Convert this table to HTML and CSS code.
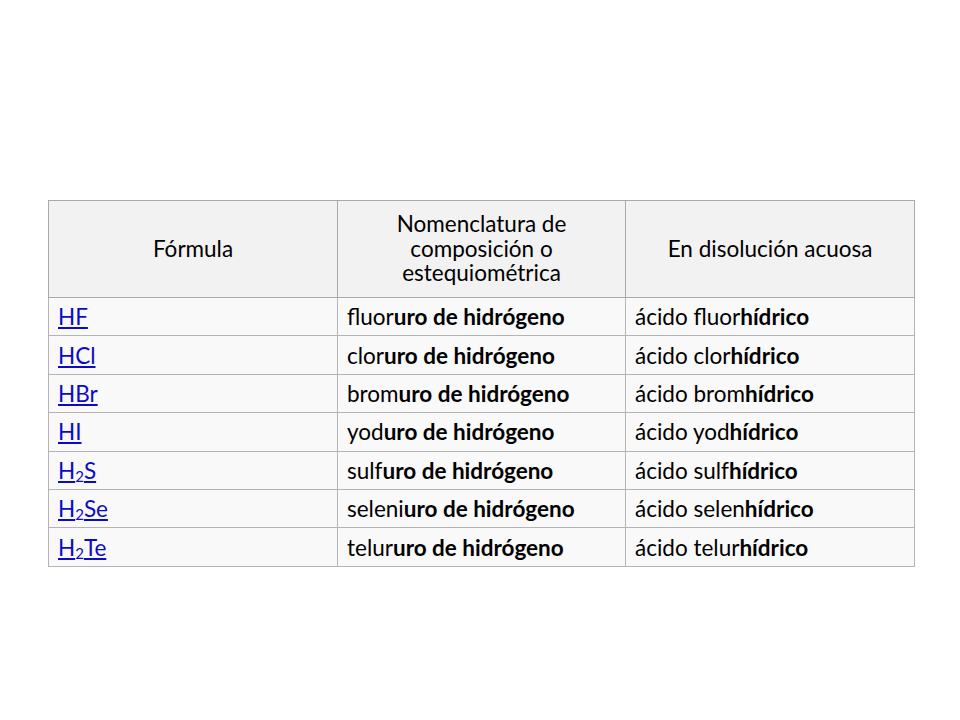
FILE: index.html
```html
<!DOCTYPE html>
<html lang="es">
<head>
<meta charset="utf-8">
<title>Hidrácidos</title>
<link rel="stylesheet" href="styles.css">
</head>
<body>
<main class="page">
<table class="chem">
<colgroup><col class="c1"><col class="c2"><col class="c3"></colgroup>
<thead>
<tr><th>Fórmula</th><th>Nomenclatura de composición o estequiométrica</th><th>En disolución acuosa</th></tr>
</thead>
<tbody>
<tr><td><a href="#">HF</a></td><td>fluor<b>uro de hidrógeno</b></td><td>ácido fluor<b>hídrico</b></td></tr>
<tr><td><a href="#">HCl</a></td><td>clor<b>uro de hidrógeno</b></td><td>ácido clor<b>hídrico</b></td></tr>
<tr><td><a href="#">HBr</a></td><td>brom<b>uro de hidrógeno</b></td><td>ácido brom<b>hídrico</b></td></tr>
<tr><td><a href="#">HI</a></td><td>yod<b>uro de hidrógeno</b></td><td>ácido yod<b>hídrico</b></td></tr>
<tr><td><a href="#">H<sub>2</sub>S</a></td><td>sulf<b>uro de hidrógeno</b></td><td>ácido sulf<b>hídrico</b></td></tr>
<tr><td><a href="#">H<sub>2</sub>Se</a></td><td>seleni<b>uro de hidrógeno</b></td><td>ácido selen<b>hídrico</b></td></tr>
<tr><td><a href="#">H<sub>2</sub>Te</a></td><td>telur<b>uro de hidrógeno</b></td><td>ácido telur<b>hídrico</b></td></tr>
</tbody>
</table>
</main>
</body>
</html>
```
FILE: styles.css
```css
html, body {
  margin: 0;
  background: #ffffff;
}
.page {
  padding: 200px 0 0 48px;
}
.chem {
  border-collapse: collapse;
  width: 866px;
  table-layout: fixed;
  font-family: Lato, "Open Sans", sans-serif;
  font-size: 22.5px;
  color: #000000;
  border: 1px solid #a9a9a9;
}
.c1 { width: 289px; }
.c2 { width: 288px; }
.c3 { width: 289px; }
.chem th {
  background: #f2f2f2;
  font-weight: normal;
  text-align: center;
  vertical-align: middle;
  height: 96px;
  padding: 0 30px;
  line-height: 24.5px;
  border: 1px solid #a9a9a9;
}
.chem td {
  background: #f9f9f9;
  height: 37.4px;
  padding: 0 9px;
  border: 1px solid #b4b4b4;
  white-space: nowrap;
}
.chem b {
  font-weight: bold;
}
.chem a {
  color: #0a0ac8;
  text-decoration: underline;
}
.chem sub {
  font-size: 15px;
  vertical-align: -3px;
  line-height: 0;
}
```
